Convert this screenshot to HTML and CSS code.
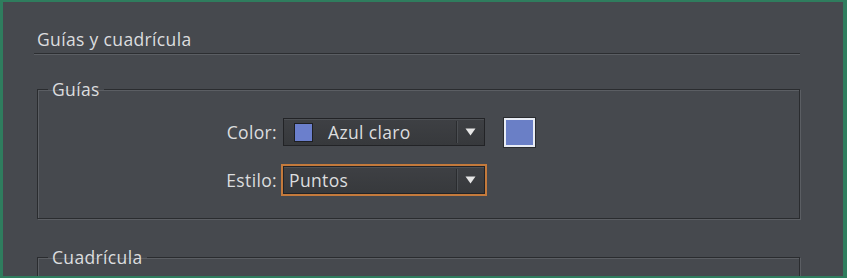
FILE: index.html
```html
<!DOCTYPE html>
<html lang="es">
<head>
    <meta charset="UTF-8">
    <link rel="stylesheet" href="styles.css">
    <title>Guías y cuadrícula</title>
</head>
<body>
<div class="panel">
    <div class="panel-title">Guías y cuadrícula</div>

    <fieldset class="group">
        <legend>Guías</legend>
        <div class="row">
            <label class="row-label">Color:</label>
            <div class="select">
                <span class="chip"></span>
                <span class="select-text">Azul claro</span>
                <span class="select-arrow"><svg width="11" height="8" viewBox="0 0 11 8"><path d="M0.5 0.5h10L5.5 7.5z" fill="#e6e6e6"/></svg></span>
            </div>
            <span class="swatch"></span>
        </div>
        <div class="row">
            <label class="row-label">Estilo:</label>
            <div class="select focused">
                <span class="select-text plain">Puntos</span>
                <span class="select-arrow"><svg width="11" height="8" viewBox="0 0 11 8"><path d="M0.5 0.5h10L5.5 7.5z" fill="#e6e6e6"/></svg></span>
            </div>
        </div>
    </fieldset>

    <fieldset class="group last">
        <legend>Cuadrícula</legend>
    </fieldset>
</div>
</body>
</html>
```

FILE: styles.css
```css
body {margin: 0; background: #46494e;}

.panel {
    box-sizing: border-box;
    width: 847px;
    height: 278px;
    overflow: hidden;
    background: #46494e;
    border: 2px solid #2f7d5e;
    border-left-width: 3px;
    border-right-width: 4px;
    padding: 27px 43px 0 31px;
    font-family: "Open Sans", "DejaVu Sans", sans-serif;
    font-size: 17.5px;
    letter-spacing: 0.35px;
    color: #dcdddf;
}

.panel-title {
    padding: 0 0 4px 3px;
    line-height: 20px;
    border-bottom: 1px solid #2c2e31;
    box-shadow: 0 1px 0 #5b5e63;
}

.group {
    margin: 25px 0 0 3px;
    padding: 19px 0 24px 0;
    border: 1px solid #2a2c2f;
    box-shadow: 1px 1px 0 #5b5e63, inset 1px 1px 0 #5b5e63;
}
.group.last {margin-top: 28px; height: 40px;}

.group legend {
    margin-left: 10px;
    padding: 0 4px 0 4px;
    line-height: 20px;
}

.row {
    display: flex;
    align-items: center;
    height: 28px;
    margin-bottom: 20px;
}
.row:last-child {margin-bottom: 0;}

.row-label {
    width: 239px;
    text-align: right;
    padding-right: 6px;
}

.select {
    box-sizing: border-box;
    width: 202px;
    height: 28px;
    display: flex;
    align-items: center;
    background: linear-gradient(#3e4044, #37393c);
    border: 1px solid #222326;
    box-shadow: inset 0 1px 0 #4d5054;
}
.select.focused {outline: 2px solid #c47a3c; outline-offset: 0;}

.chip {
    box-sizing: border-box;
    width: 19px;
    height: 19px;
    margin-left: 10px;
    background: #6b7fcc;
    border: 1px solid #1e1f22;
}

.select-text {flex: 1; padding-left: 15px;}
.select-text.plain {padding-left: 5px;}

.select-arrow {
    box-sizing: border-box;
    width: 28px;
    height: 22px;
    display: flex;
    align-items: center;
    justify-content: center;
    border-left: 1px solid #2a2c2f;
    box-shadow: inset 1px 0 0 #4c4f53;
}

.swatch {
    box-sizing: border-box;
    width: 31px;
    height: 29px;
    margin-left: 19px;
    background: #6a7fc6;
    border: 2px solid #e8ecf5;
    box-shadow: 0 0 0 1px #2a2c2f;
}
```
